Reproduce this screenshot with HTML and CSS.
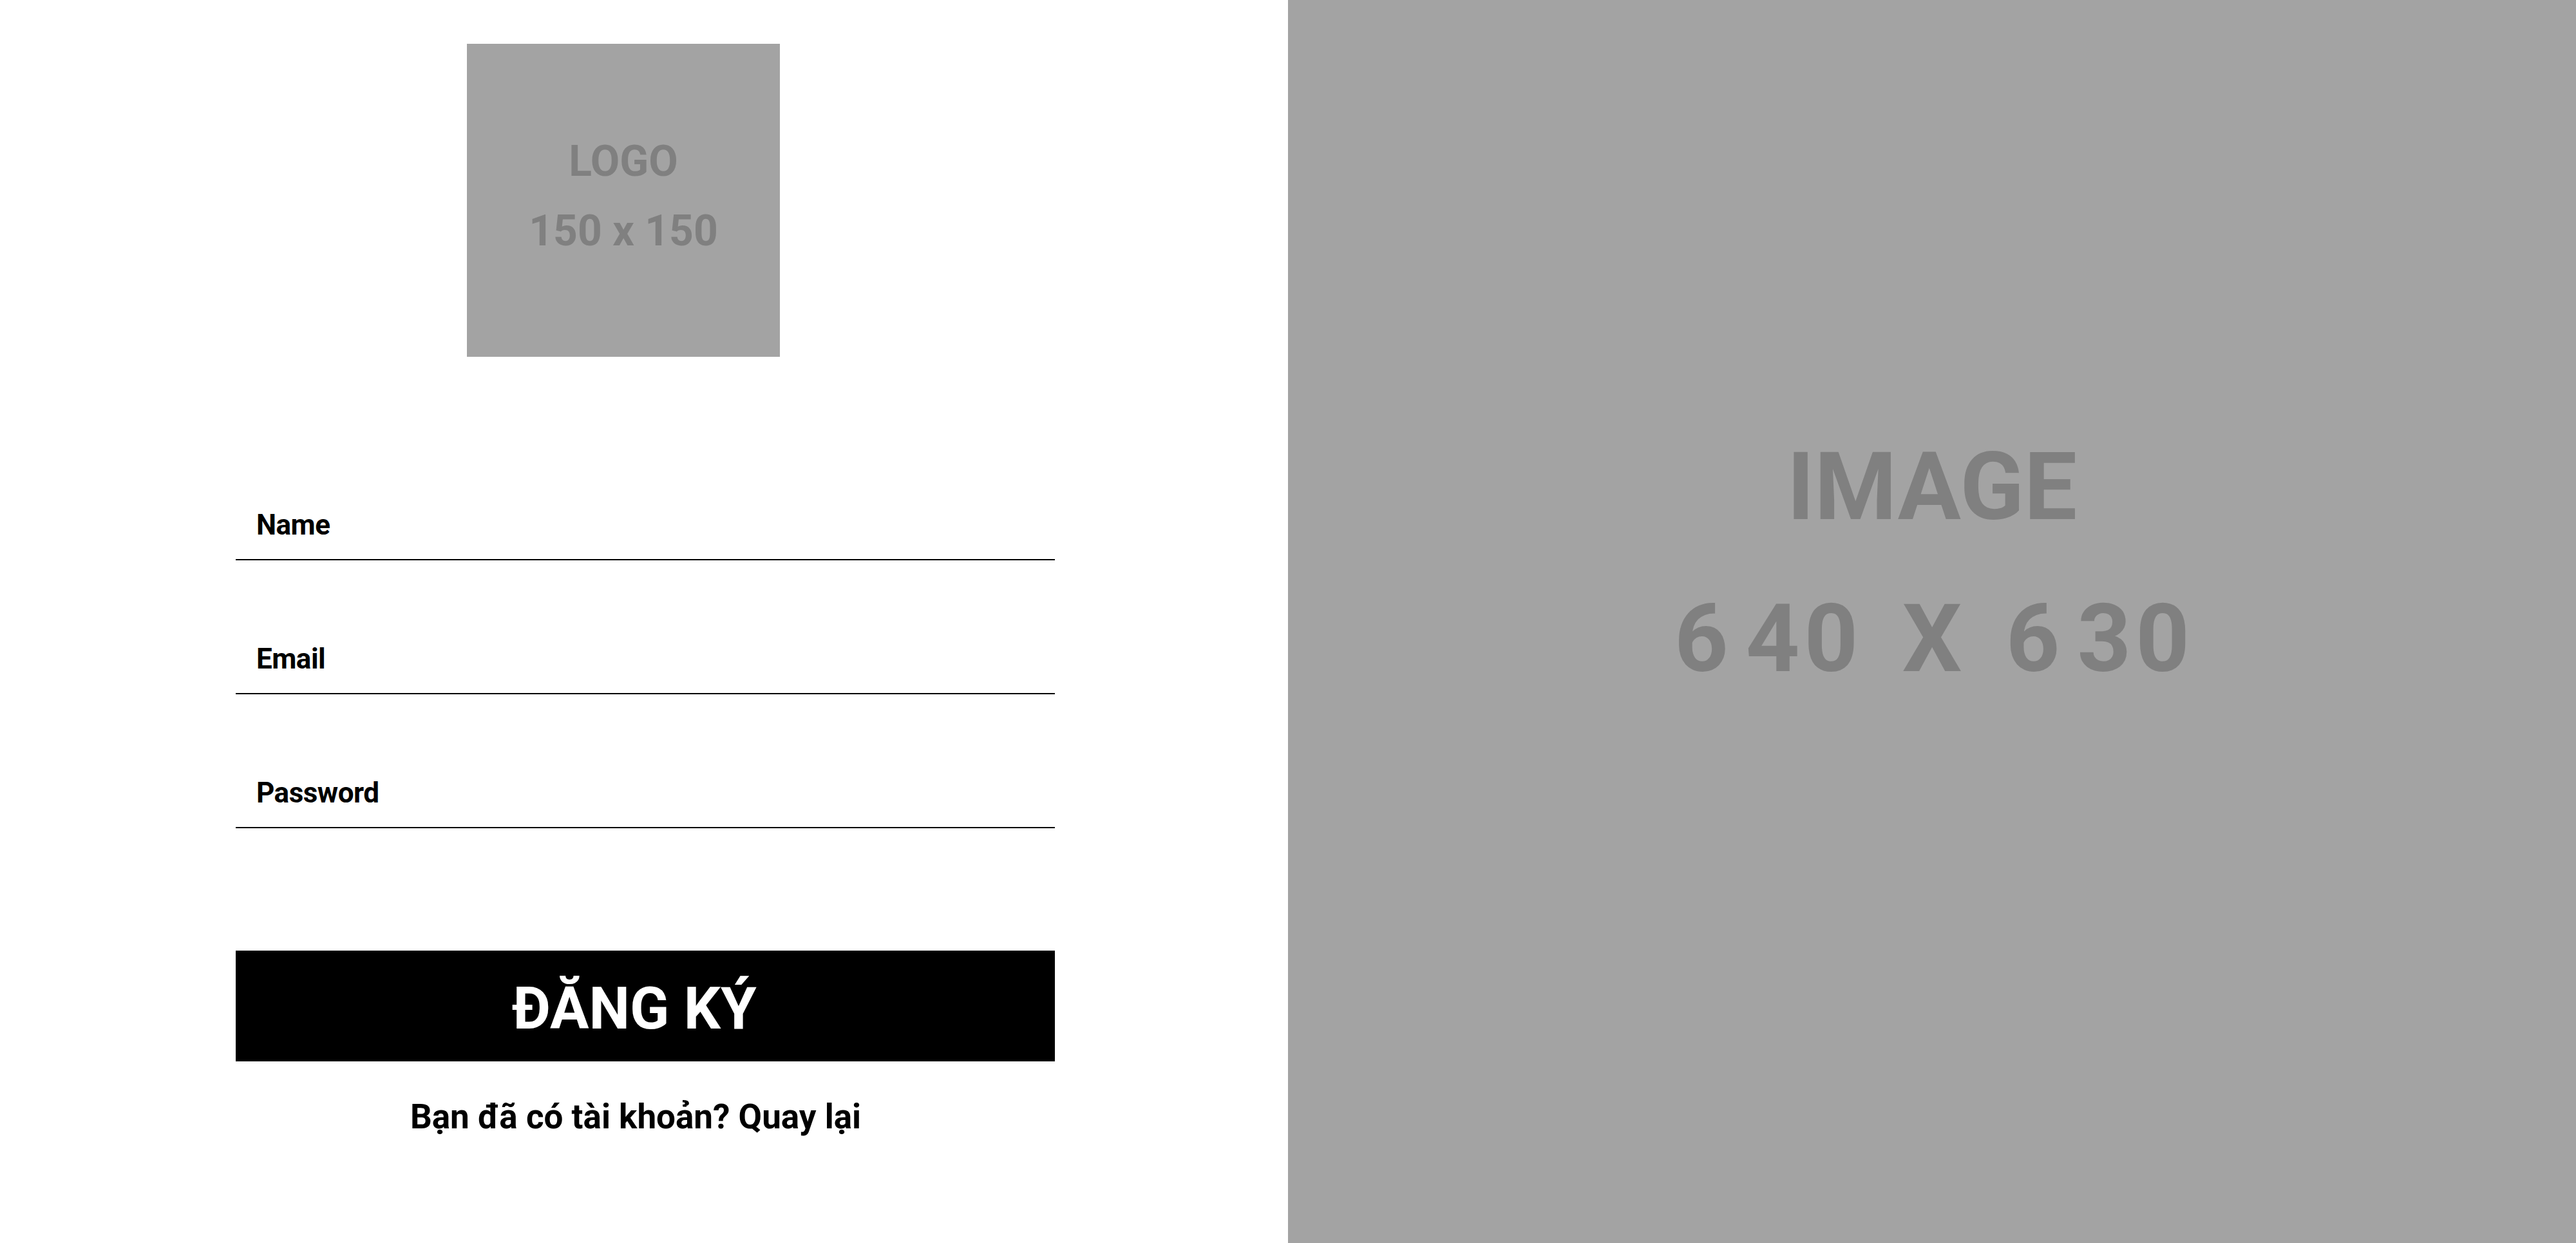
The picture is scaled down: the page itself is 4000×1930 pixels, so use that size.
FILE: index.html
```html
<!DOCTYPE html>
<html lang="vi">
<head>
<meta charset="utf-8">
<title>Đăng ký</title>
<link rel="stylesheet" href="styles.css">
</head>
<body>
<div class="page">
  <section class="form-side">
    <div class="form">
      <div class="logo">
        <span>LOGO</span>
        <span>150 x 150</span>
      </div>
      <div class="fields">
        <div class="field"><span class="label">Name</span></div>
        <div class="field"><span class="label">Email</span></div>
        <div class="field"><span class="label">Password</span></div>
      </div>
      <button class="submit" type="button">ĐĂNG KÝ</button>
      <p class="switch">Bạn đã có tài khoản? Quay lại</p>
    </div>
  </section>
  <section class="image-side">
    <div class="placeholder">
      <span>IMAGE</span>
      <span class="size"><span class="wide">6</span>40 X <span class="wide">6</span>30</span>
    </div>
  </section>
</div>
</body>
</html>
```

FILE: styles.css
```css
html, body {
  margin: 0;
  padding: 0;
  background: #ffffff;
}

body {
  font-family: Roboto, "Noto Sans", "DejaVu Sans", sans-serif;
  font-weight: 700;
  color: #000000;
}

.page {
  display: grid;
  grid-template-columns: 2000px 2000px;
  height: 1930px;
}

.form-side {
  background: #ffffff;
  padding-top: 68px;
}

.form {
  width: 1272px;
  margin-left: 366px;
  display: flex;
  flex-direction: column;
}

.logo {
  width: 486px;
  height: 486px;
  margin-left: 359px;
  background: #a3a3a3;
  color: #808080;
  display: flex;
  flex-direction: column;
  align-items: center;
  justify-content: center;
  box-sizing: border-box;
  padding-bottom: 13px;
  font-size: 66px;
  line-height: 108px;
}

.fields {
  margin-top: 238px;
  display: flex;
  flex-direction: column;
  gap: 130px;
}

.field {
  border-bottom: 2px solid #000000;
  padding: 0 0 30px 32px;
  font-size: 44px;
  line-height: 46px;
  letter-spacing: -0.5px;
}

.submit {
  margin-top: 190px;
  height: 172px;
  border: none;
  background: #000000;
  color: #ffffff;
  font-family: Roboto, "Noto Sans", "DejaVu Sans", sans-serif;
  font-weight: 700;
  font-size: 90px;
  padding: 8px 34px 0 0;
  display: flex;
  align-items: center;
  justify-content: center;
  cursor: pointer;
}

.switch {
  margin: 60px 0 0 0;
  font-size: 53px;
  line-height: 53px;
  text-align: center;
  padding-right: 30px;
}

.image-side {
  background: #a3a3a3;
  color: #808080;
}

.placeholder {
  padding-top: 639px;
  display: flex;
  flex-direction: column;
  align-items: center;
  font-size: 146px;
  line-height: 236px;
}

.size {
  letter-spacing: 7px;
  word-spacing: 18px;
  padding-left: 7px;
}

.wide {
  margin-right: 20px;
}
```
